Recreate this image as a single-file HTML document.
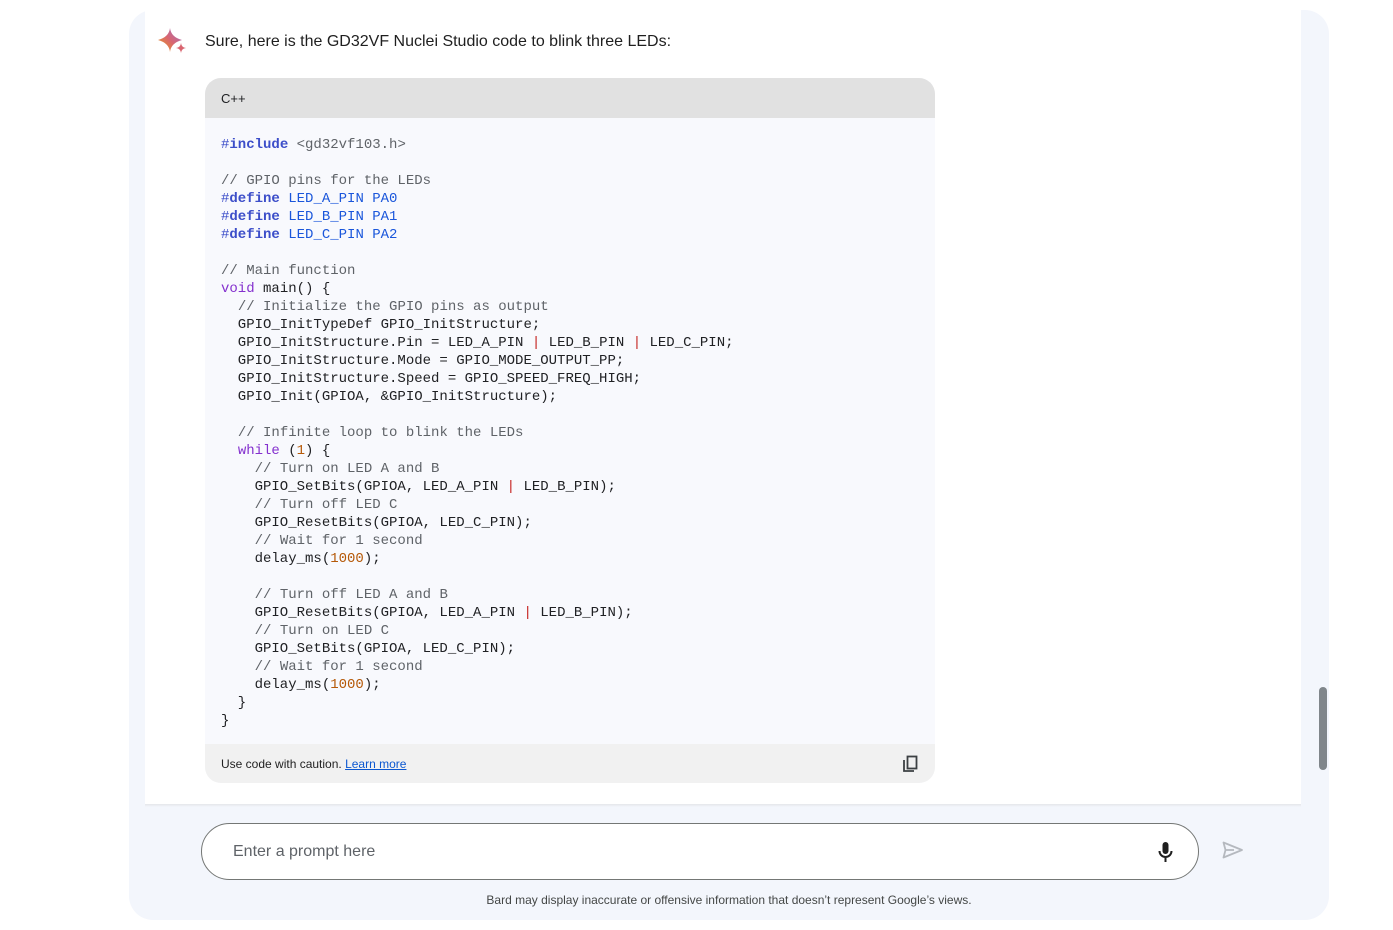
<!DOCTYPE html>
<html><head><meta charset="utf-8"><style>
*{margin:0;padding:0;box-sizing:border-box}
body{width:1393px;height:930px;background:#fff;position:relative;overflow:hidden;font-family:"Liberation Sans",sans-serif;color:#1f1f1f}
.outer{position:absolute;left:129px;top:10px;width:1200px;height:910px;background:#f3f6fc;border-radius:24px}
.inner{position:absolute;left:145px;top:10px;width:1156px;height:796px;background:#fff}
.shadow{position:absolute;left:145px;top:804px;width:1156px;height:3px;background:linear-gradient(#e4e6ea,#f3f6fc)}
.msg{position:absolute;left:205px;top:33px;font-size:16px;color:#1f1f1f}
.code{position:absolute;left:205px;top:78px;width:730px;height:705px;border-radius:16px;overflow:hidden;background:#f8f9fd}
.hdr{height:40px;background:#e1e1e1;font-size:13px;padding:13px 0 0 16px;color:#202124}
pre{font-family:"Liberation Mono",monospace;font-size:14px;line-height:18px;padding:18px 0 0 16px;color:#202124;height:626px}
.ftr{position:absolute;left:0;bottom:0;width:100%;height:39px;background:#f1f1f1;font-size:12px;padding:13px 0 0 16px;color:#1f1f1f}
.ftr a{color:#0b57d0;text-decoration:underline}
.k{color:#3c4ec9}.kb{color:#3c4ec9;font-weight:bold}.c{color:#5f6368}.p{color:#8430ce}.n{color:#b55908}.r{color:#c5221f}.b{color:#1a56db}
.input{position:absolute;left:201px;top:823px;width:998px;height:57px;border:1px solid #747775;border-radius:29px;background:#fff}
.ph{position:absolute;left:31px;top:19px;font-size:16px;color:#5f6368}
.disc{position:absolute;left:0;width:1458px;top:893px;text-align:center;font-size:12px;color:#444746}
.sb{position:absolute;left:1319px;top:687px;width:8px;height:83px;border-radius:4px;background:#80868b}
</style></head><body>
<div class="outer"></div>
<div class="inner"></div>
<div class="shadow"></div>
<svg style="position:absolute;left:158px;top:28px" width="30" height="28" viewBox="0 0 30 28">
<defs><linearGradient id="g" x1="0" y1="1" x2="1" y2="0"><stop offset="0" stop-color="#e8a413"/><stop offset="0.5" stop-color="#d96570"/><stop offset="1" stop-color="#9b72cb"/></linearGradient></defs>
<path d="M12 0 Q13 9 24 12 Q13 15 12 24 Q11 15 0 12 Q11 9 12 0Z" fill="url(#g)"/>
<path d="M23 15 Q23.5 19.5 28 20 Q23.5 20.5 23 25 Q22.5 20.5 18 20 Q22.5 19.5 23 15Z" fill="#d96570"/>
</svg>
<div class="msg">Sure, here is the GD32VF Nuclei Studio code to blink three LEDs:</div>
<div class="code">
<div class="hdr">C++</div>
<pre><span class="k">#</span><span class="kb">include</span> <span class="c">&lt;gd32vf103.h&gt;</span>

<span class="c">// GPIO pins for the LEDs</span>
<span class="k">#</span><span class="kb">define</span> <span class="b">LED_A_PIN PA0</span>
<span class="k">#</span><span class="kb">define</span> <span class="b">LED_B_PIN PA1</span>
<span class="k">#</span><span class="kb">define</span> <span class="b">LED_C_PIN PA2</span>

<span class="c">// Main function</span>
<span class="p">void</span> main() {
  <span class="c">// Initialize the GPIO pins as output</span>
  GPIO_InitTypeDef GPIO_InitStructure;
  GPIO_InitStructure.Pin = LED_A_PIN <span class="r">|</span> LED_B_PIN <span class="r">|</span> LED_C_PIN;
  GPIO_InitStructure.Mode = GPIO_MODE_OUTPUT_PP;
  GPIO_InitStructure.Speed = GPIO_SPEED_FREQ_HIGH;
  GPIO_Init(GPIOA, &amp;GPIO_InitStructure);

  <span class="c">// Infinite loop to blink the LEDs</span>
  <span class="p">while</span> (<span class="n">1</span>) {
    <span class="c">// Turn on LED A and B</span>
    GPIO_SetBits(GPIOA, LED_A_PIN <span class="r">|</span> LED_B_PIN);
    <span class="c">// Turn off LED C</span>
    GPIO_ResetBits(GPIOA, LED_C_PIN);
    <span class="c">// Wait for 1 second</span>
    delay_ms(<span class="n">1000</span>);

    <span class="c">// Turn off LED A and B</span>
    GPIO_ResetBits(GPIOA, LED_A_PIN <span class="r">|</span> LED_B_PIN);
    <span class="c">// Turn on LED C</span>
    GPIO_SetBits(GPIOA, LED_C_PIN);
    <span class="c">// Wait for 1 second</span>
    delay_ms(<span class="n">1000</span>);
  }
}</pre>
<div class="ftr">Use code with caution. <a>Learn more</a>
<svg style="position:absolute;left:697px;top:11px" width="18" height="18" viewBox="0 0 18 18" fill="none" stroke="#3c4043" stroke-width="1.8"><path d="M2 5v11h10"/><rect x="5.5" y="1.5" width="9" height="12"/></svg>
</div>
</div>
<div class="input"><div class="ph">Enter a prompt here</div>
<svg style="position:absolute;left:955px;top:17px" width="18" height="22" viewBox="0 0 18 22"><rect x="5.5" y="1" width="6" height="12" rx="3" fill="#1f1f1f"/><path d="M2.5 10a6 6 0 0 0 12 0M8.5 16v5" stroke="#1f1f1f" stroke-width="2" fill="none"/></svg>
</div>
<svg style="position:absolute;left:1222px;top:841px" width="22" height="18" viewBox="0 0 22 18"><path d="M1.5 1.5L20 9 1.5 16.5 3.5 9Z M3.5 9H12" stroke="#b5b9bf" stroke-width="1.8" fill="none" stroke-linejoin="round"/></svg>
<div class="disc">Bard may display inaccurate or offensive information that doesn’t represent Google’s views.</div>
<div class="sb"></div>
</body></html>
